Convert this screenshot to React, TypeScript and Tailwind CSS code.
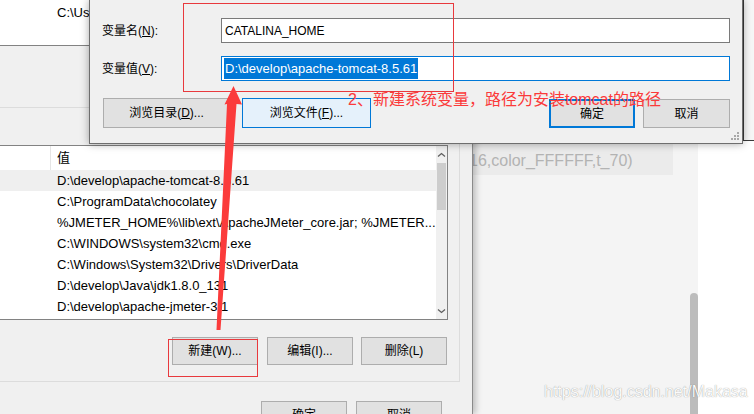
import React from 'react';

const rows = [
  'D:\\develop\\apache-tomcat-8.5.61',
  'C:\\ProgramData\\chocolatey',
  '%JMETER_HOME%\\lib\\ext\\ApacheJMeter_core.jar; %JMETER...',
  'C:\\WINDOWS\\system32\\cmd.exe',
  'C:\\Windows\\System32\\Drivers\\DriverData',
  'D:\\develop\\Java\\jdk1.8.0_131',
  'D:\\develop\\apache-jmeter-3.1',
];

function WinButton({ children, className = '' }: { children: React.ReactNode; className?: string }) {
  return (
    <div className={`flex shrink-0 items-center justify-center text-[12px] text-black ${className}`}>
      {children}
    </div>
  );
}

function Chevron({ down = false }: { down?: boolean }) {
  return (
    <svg width="9" height="6" viewBox="0 0 9 6">
      <path d={down ? 'M1 1.5 L4.5 4.5 L8 1.5' : 'M1 4.5 L4.5 1.5 L8 4.5'} fill="none" stroke="#606060" strokeWidth="1.3" />
    </svg>
  );
}

export default function App() {
  return (
    <div className="relative h-[414px] w-[754px] overflow-hidden bg-[#f4f4f4] font-['Liberation_Sans','Noto_Sans_CJK_SC',sans-serif]">
      {/* Web page behind the dialogs */}
      <div className="flex h-full w-full">
        <div className="flex-1 pt-[143px]">
          <div className="h-[32px] w-[673px] bg-[#ebebeb] pl-[469px] pt-[8px] text-[16px] leading-[20px] whitespace-nowrap text-[#b3b3b3]">
            16,color_FFFFFF,t_70)
          </div>
        </div>
        <div className="w-[8px] pt-[293px]">
          <div className="h-full rounded-t-[4px] bg-[#bcbcbc]" />
        </div>
        <div className="w-[56px] bg-white" />
      </div>

      {/* Environment variables dialog */}
      <div className="absolute left-0 top-0 h-[414px] w-[473px] border-r border-[#8a8a8a] bg-[#f0f0f0] shadow-[3px_0_6px_rgba(0,0,0,0.22)]">
        <div className="h-[46px] w-[448px] border-b border-r border-[#828282] bg-white">
          <div className="flex h-[21px] items-center pl-[57px] pt-[4px] text-[13px] text-black whitespace-nowrap">
            C:\Users\Makasa\AppData\Local\Temp
          </div>
        </div>
        <div className="mt-[61px] h-[275px] w-[460px] border-b border-r border-t border-[#dcdcdc]">
          <div className="mt-[37px] flex h-[175px] w-[448px] border-b border-r border-t border-[#828282] bg-white">
            <div className="flex-1">
              <div className="flex h-[24px] text-[13px] text-black">
                <div className="w-[51px] border-r border-[#e5e5e5]" />
                <div className="flex items-center pl-[6px]">值</div>
              </div>
              {rows.map((r, i) => (
                <div
                  key={i}
                  className={`flex h-[21px] items-center pl-[57px] text-[13px] whitespace-nowrap text-black ${i === 0 ? 'bg-[#efefef]' : ''}`}
                >
                  {r}
                </div>
              ))}
            </div>
            <div className="flex w-[17px] flex-col bg-[#f0f0f0]">
              <div className="flex h-[17px] items-center justify-center">
                <Chevron />
              </div>
              <div className="mx-[1px] h-[47px] bg-[#cdcdcd]" />
              <div className="flex-1" />
              <div className="flex h-[17px] items-center justify-center">
                <Chevron down />
              </div>
            </div>
          </div>
          <div className="mt-[17px] flex pl-[172px]">
            <WinButton className="h-[28px] w-[86px] border border-[#adadad] bg-[#e1e1e1]">新建(W)...</WinButton>
            <WinButton className="ml-[9px] h-[28px] w-[86px] border border-[#adadad] bg-[#e1e1e1]">编辑(I)...</WinButton>
            <WinButton className="ml-[8px] h-[28px] w-[86px] border border-[#adadad] bg-[#e1e1e1]">删除(L)</WinButton>
          </div>
        </div>
        <div className="mt-[19px] flex pl-[261px]">
          <WinButton className="h-[28px] w-[86px] border border-[#adadad] bg-[#e1e1e1]">确定</WinButton>
          <WinButton className="ml-[9px] h-[28px] w-[86px] border border-[#adadad] bg-[#e1e1e1]">取消</WinButton>
        </div>
      </div>

      {/* Window edge at the far right */}
      <div className="absolute left-[742px] top-0 h-[141px] w-[12px] border-b border-l-2 border-[#3a3a3a] bg-[#f6f6f6]" />

      {/* Edit system variable dialog */}
      <div className="absolute left-[89px] top-0 h-[144px] w-[654px] border-x border-b border-[#6e6e6e] bg-[#f0f0f0] pl-[12px] pr-[12px] pt-[18px] shadow-[0_0_8px_rgba(0,0,0,0.35)]">
        <div className="flex h-[25px] items-center">
          <div className="w-[119px] text-[12px] text-black">
            变量名(<span className="underline">N</span>):
          </div>
          <div className="flex h-full flex-1 items-center border border-[#7a7a7a] bg-white pl-[3px] text-[12px] text-black">
            CATALINA_HOME
          </div>
        </div>
        <div className="mt-[13px] flex h-[25px] items-center">
          <div className="w-[119px] text-[12px] text-black">
            变量值(<span className="underline">V</span>):
          </div>
          <div className="flex h-full flex-1 items-center border border-[#0078d7] bg-white pl-[2px]">
            <span className="flex h-[21px] items-center bg-[#0078d7] px-[1px] text-[13px] whitespace-nowrap text-white">
              D:\develop\apache-tomcat-8.5.61
            </span>
          </div>
        </div>
        <div className="mt-[17px] flex items-end">
          <WinButton className="ml-[1px] h-[30px] w-[127px] border border-[#adadad] bg-[#e1e1e1]">
            浏览目录(<span className="underline">D</span>)...
          </WinButton>
          <WinButton className="ml-[12px] h-[30px] w-[129px] border border-[#0078d7] bg-[#e5f1fb]">
            浏览文件(<span className="underline">F</span>)...
          </WinButton>
          <WinButton className="ml-auto h-[29px] w-[86px] border-2 border-[#0078d7] bg-[#e1e1e1]">确定</WinButton>
          <WinButton className="ml-[8px] h-[29px] w-[87px] border border-[#adadad] bg-[#e1e1e1]">取消</WinButton>
        </div>
        <svg className="absolute bottom-[2px] right-[2px]" width="9" height="9" viewBox="0 0 9 9">
          <g fill="#a8a8a8">
            <rect x="6" y="0" width="2" height="2" />
            <rect x="3" y="3" width="2" height="2" />
            <rect x="6" y="3" width="2" height="2" />
            <rect x="0" y="6" width="2" height="2" />
            <rect x="3" y="6" width="2" height="2" />
            <rect x="6" y="6" width="2" height="2" />
          </g>
        </svg>
      </div>

      {/* Annotations */}
      <div className="absolute left-[183px] top-[3px] h-[89px] w-[271px] border border-[#e8393d]" />
      <div className="absolute left-[168px] top-[339px] h-[38px] w-[90px] border border-[#e8393d]" />
      <div className="absolute left-[348px] top-[90px] text-[16px] leading-[20px] whitespace-nowrap text-[#fb3a3a]">
        2、新建系统变量，路径为安装tomcat的路径
      </div>
      <svg className="pointer-events-none absolute left-0 top-0" width="754" height="414" viewBox="0 0 754 414">
        <polygon
          points="233.5,86 242,104.5 236.5,104 220.5,330 216.5,330 227,104 224.5,104.5"
          fill="#fb3b3b"
        />
      </svg>

      {/* Watermark */}
      <div className="absolute left-[544px] top-[382px] text-[16px] leading-[20px] whitespace-nowrap text-[#fafafa] [text-shadow:0_0_1px_rgba(0,0,0,0.45)]">
        https://blog.csdn.net/Makasa
      </div>
    </div>
  );
}
